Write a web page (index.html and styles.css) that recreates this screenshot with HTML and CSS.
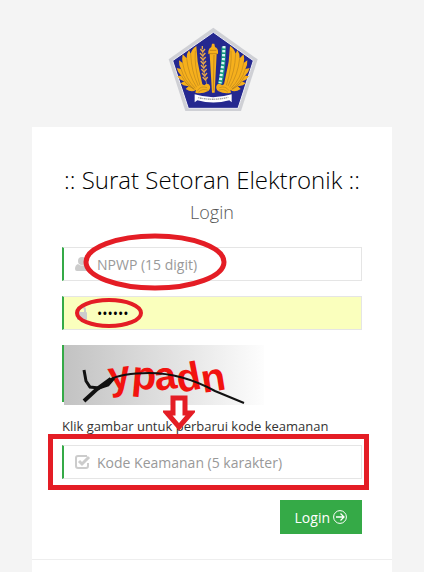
FILE: index.html
```html
<!DOCTYPE html>
<html lang="id">
<head>
    <meta charset="UTF-8">
    <meta name="viewport" content="width=device-width, initial-scale=1">
    <title>Surat Setoran Elektronik</title>
    <link rel="stylesheet" href="styles.css">
</head>
<body>
    <div class="logo">
        <svg width="104" height="100" viewBox="0 0 312 300">
            <path d="M160 23L293 118L243 273H76L26 118Z" fill="#cfd0d5"/>
            <path d="M160 37L280 122L234 265H85L38 122Z" fill="#25288f" stroke="#eeeef4" stroke-width="3"/>
            <!-- wings -->
            <g id="wing">
                <path d="M109 78Q96 86 92 101L87 90Q79 101 80 115L68 103Q65 118 68 129L57 121Q56 137 63 147L50 144Q53 158 64 167L52 168Q59 181 73 184L62 190Q72 200 87 197L77 207Q96 219 108 209L106 218Q124 224 145 213Q154 204 148 194Q139 188 133 196L127 193Q120 160 113 125Z" fill="#f6b01c"/>
                <path d="M106 92Q102 140 120 196M92 101Q94 155 115 198M80 115Q85 164 110 202M68 129Q76 176 106 205M63 147Q74 184 103 207M64 167Q77 193 101 208M73 184Q86 201 104 208M112 212Q122 196 141 203M115 217Q128 204 144 211" fill="none" stroke="#a8761c" stroke-width="1.500"/>
            </g>
            <use href="#wing" transform="translate(319 0) scale(-1 1)"/>
            <!-- rice -->
            <path d="M128 90Q129 150 140 192" fill="none" stroke="#e8aa43" stroke-width="2"/>
            <path d="M127 78v10M121 87l7 9l7-9M120 99l8 9l8-9M121 111l8 9l8-9M122 123l8 9l8-9M123 135l8 9l8-9M124 147l8 9l8-9M126 159l8 9l7-9M128 171l8 9l7-9" fill="none" stroke="#e8a84b" stroke-width="4"/>
            <!-- cotton -->
            <path d="M191 80Q192 145 180 192" fill="none" stroke="#159c80" stroke-width="13"/>
            <path d="M192 78L190 120L180 190" fill="none" stroke="#d8f4f4" stroke-width="9" stroke-dasharray="7 5"/>
            <!-- staff -->
            <path d="M154 81L156 71H163L165 81Q174 85 174 94V102H170L164 218H156L149 102H145V94Q146 85 154 81Z" fill="#f6b01c"/>
            <path d="M146 101H173M150 91H169M162 105L160 212" fill="none" stroke="#ad7618" stroke-width="2"/>
            <path d="M104 223Q159 240 215 223V247L208 241Q160 254 112 241L104 247Z" fill="#fff"/>
            <path d="M115 233Q160 243 205 232" fill="none" stroke="#999" stroke-width="4" stroke-dasharray="3 2 5 2"/>
        </svg>
    </div>
    <main class="content">
        <form class="login-form">
            <h1 class="form-title">:: Surat Setoran Elektronik ::</h1>
            <h2 class="form-subtitle">Login</h2>
            <div class="field">
                <svg class="icon" width="14" height="16" viewBox="0 0 14 16" fill="#ccc">
                    <ellipse cx="7" cy="5" rx="4" ry="4"/>
                    <path d="M3 8Q7 11 11 8Q14 9 14 13Q14 15 12 15H2Q0 15 0 13Q0 9 3 8Z"/>
                </svg>
                <input type="text" class="control" name="npwp" aria-label="NPWP" placeholder="NPWP (15 digit)">
                <svg class="mark mark-npwp" width="144" height="58" viewBox="0 0 144 58">
                    <ellipse cx="72" cy="29" rx="69" ry="26" fill="none" stroke="#e41d25" stroke-width="5"/>
                </svg>
            </div>
            <div class="field">
                <svg class="icon" width="14" height="16" viewBox="0 0 14 16">
                    <path d="M4 8V5a3 3 0 0 1 6 0V8" fill="none" stroke="#ccc" stroke-width="2"/>
                    <rect x="2" y="7" width="10" height="8" rx="1" fill="#ccc"/>
                </svg>
                <input type="password" class="control filled" name="password" aria-label="Password" value="123456">
                <svg class="mark mark-password" width="68" height="30" viewBox="0 0 68 30">
                    <ellipse cx="34" cy="15" rx="32" ry="13" fill="none" stroke="#e41d25" stroke-width="4"/>
                </svg>
            </div>
            <div class="captcha">
                <button type="button" class="captcha-image" aria-label="Perbarui kode keamanan">
                    <svg width="202" height="60" viewBox="0 0 202 60">
                        <defs>
                            <linearGradient id="shade" x1="0" y1="0" x2="1" y2="0">
                                <stop offset="0" stop-color="#c2c2c2"/>
                                <stop offset="1" stop-color="#fdfdfd"/>
                            </linearGradient>
                        </defs>
                        <rect x="2" width="200" height="60" fill="url(#shade)"/>
                        <path d="M0 0H2V57H0Z" fill="#35aa47"/>
                        <g class="captcha-text">
                            <text transform="translate(48 45) rotate(-8)">y</text>
                            <text transform="translate(69 43) rotate(5)">p</text>
                            <text transform="translate(94 46) rotate(-8)">a</text>
                            <text transform="translate(117 48) rotate(-11)">d</text>
                            <text transform="translate(141 48) rotate(-9)">n</text>
                        </g>
                        <path d="M22 25L24 36L28 42L37 43L46 40L52 33" fill="none" stroke="#111" stroke-width="3"/>
                        <path d="M22 56L35 44L49 34" fill="none" stroke="#111" stroke-width="4"/>
                        <path d="M47 35Q60 28 87 28Q120 28 153 46L182 58" fill="none" stroke="#111" stroke-width="2"/>
                    </svg>
                </button>
                <p class="hint">Klik gambar untuk perbarui kode keamanan</p>
                <svg class="mark mark-arrow" width="32" height="37" viewBox="0 0 32 37">
                    <path d="M10 3H22V18H28L16 32L4 18H10Z" fill="#fff" stroke="#e41d25" stroke-width="5"/>
                </svg>
            </div>
            <div class="field">
                <svg class="icon" width="16" height="16" viewBox="0 0 16 16" fill="none" stroke="#ccc">
                    <path d="M12 2H3Q1 2 1 4V12Q1 14 3 14H11Q13 14 13 12V9" stroke-width="2"/>
                    <path d="M4 7L7 10L14 3" stroke-width="3"/>
                </svg>
                <input type="text" class="control" name="kode" aria-label="Kode Keamanan" placeholder="Kode Keamanan (5 karakter)">
                <div class="mark mark-code"></div>
            </div>
            <div class="actions">
                <button type="submit" class="btn">Login
                    <svg width="14" height="14" viewBox="0 0 14 14" fill="none" stroke="#fff">
                        <circle cx="7" cy="7" r="6.4"/>
                        <path d="M3 7H11M7.500 3.500L11 7L7.500 10.500" stroke-width="1.300"/>
                    </svg>
                </button>
            </div>
        </form>
    </main>
</body>
</html>
```

FILE: styles.css
```css
* {
    box-sizing: border-box;
}
body {
    display: flex;
    flex-direction: column;
    min-height: 100vh;
    margin: 0;
    background: #f4f4f4;
    color: #333;
    font-family: "Open Sans", sans-serif;
    font-size: 13px;
}
.logo {
    display: flex;
    justify-content: center;
    padding: 20px 0 7px;
}
.content {
    flex: 1;
    margin: 0 32px;
    background: #fff;
}
.login-form {
    padding: 35px 30px 25px;
    border-bottom: 1px solid #eee;
}
.form-title,
.form-subtitle {
    margin: 0;
    font-weight: 300;
    text-align: center;
    white-space: nowrap;
}
.form-title {
    color: #000;
    font-size: 24px;
    line-height: 36px;
}
.form-subtitle {
    margin-bottom: 21px;
    color: #555;
    font-size: 18px;
    line-height: 28px;
}
.field {
    position: relative;
    margin-bottom: 15px;
}
/* the icon stays above the autofill colour */
.icon {
    position: absolute;
    top: 9px;
    left: 13px;
    z-index: 1;
}
.control {
    display: block;
    width: 100%;
    height: 34px;
    padding: 6px 12px 6px 33px;
    border: 1px solid #e5e5e5;
    border-left: 2px solid #35aa47;
    border-radius: 0;
    outline: none;
    background: transparent;
    color: #000;
    font-family: inherit;
    font-size: 14px;
}
.control::placeholder {
    color: #999;
    opacity: 1;
}
.filled {
    background: #faffbd;
}
.captcha {
    position: relative;
}
.captcha-image {
    display: block;
    padding: 0;
    border: 0;
    background: none;
    cursor: pointer;
}
.captcha-image svg {
    display: block;
}
.captcha-text {
    fill: #f2130f;
    font-size: 40px;
    font-weight: 700;
}
.hint {
    margin: 0;
    padding: 11px 0 9px;
    line-height: 20px;
    white-space: nowrap;
}
.actions {
    display: flex;
    justify-content: flex-end;
    padding-top: 6px;
}
.btn {
    display: flex;
    align-items: center;
    gap: 3px;
    height: 34px;
    padding: 0 15px;
    border: 0;
    background: #35aa47;
    color: #fff;
    font-family: inherit;
    font-size: 14px;
    cursor: pointer;
}
/* red pen marks over the form */
.mark {
    position: absolute;
    z-index: 2;
    pointer-events: none;
}
.mark-npwp {
    top: -14px;
    left: 21px;
}
.mark-password {
    top: 2px;
    left: 13px;
}
.mark-arrow {
    top: 50px;
    left: 101px;
}
.mark-code {
    top: -11px;
    right: -7px;
    bottom: -11px;
    left: -14px;
    border: 5px solid #e41d25;
}
```
